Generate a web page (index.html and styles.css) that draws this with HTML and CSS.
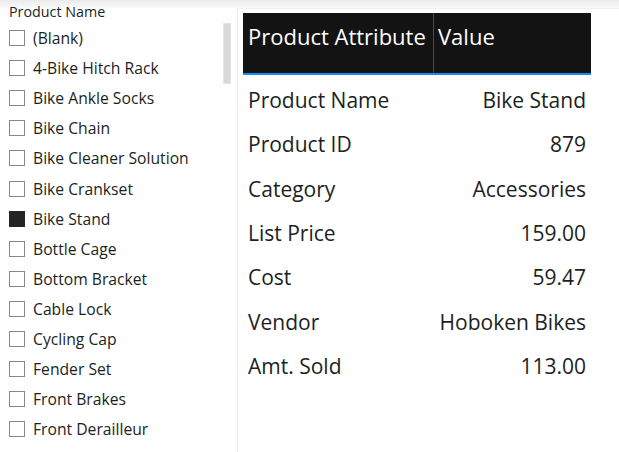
FILE: index.html
```html
<!DOCTYPE html>
<html>
<head>
<meta charset="utf-8">
<link rel="stylesheet" href="styles.css">
</head>
<body>
<div class="page">
  <div class="topband"></div>
  <div class="main">
    <section class="slicer">
      <div class="slicer-title">Product Name</div>
      <div class="slicer-body">
        <ul class="items">
          <li class="item"><span class="box"></span><span>(Blank)</span></li>
          <li class="item"><span class="box"></span><span>4-Bike Hitch Rack</span></li>
          <li class="item"><span class="box"></span><span>Bike Ankle Socks</span></li>
          <li class="item"><span class="box"></span><span>Bike Chain</span></li>
          <li class="item"><span class="box"></span><span>Bike Cleaner Solution</span></li>
          <li class="item"><span class="box"></span><span>Bike Crankset</span></li>
          <li class="item"><span class="box checked"></span><span>Bike Stand</span></li>
          <li class="item"><span class="box"></span><span>Bottle Cage</span></li>
          <li class="item"><span class="box"></span><span>Bottom Bracket</span></li>
          <li class="item"><span class="box"></span><span>Cable Lock</span></li>
          <li class="item"><span class="box"></span><span>Cycling Cap</span></li>
          <li class="item"><span class="box"></span><span>Fender Set</span></li>
          <li class="item"><span class="box"></span><span>Front Brakes</span></li>
          <li class="item"><span class="box"></span><span>Front Derailleur</span></li>
        </ul>
        <div class="track"><div class="thumb"></div></div>
      </div>
    </section>
    <section class="visual">
      <div class="table">
        <div class="thead">
          <div class="th th-attr">Product Attribute</div>
          <div class="th th-val">Value</div>
        </div>
        <div class="tbody">
          <div class="tr"><span class="attr">Product Name</span><span class="val">Bike Stand</span></div>
          <div class="tr"><span class="attr">Product ID</span><span class="val">879</span></div>
          <div class="tr"><span class="attr">Category</span><span class="val">Accessories</span></div>
          <div class="tr"><span class="attr">List Price</span><span class="val">159.00</span></div>
          <div class="tr"><span class="attr">Cost</span><span class="val">59.47</span></div>
          <div class="tr"><span class="attr">Vendor</span><span class="val">Hoboken Bikes</span></div>
          <div class="tr"><span class="attr">Amt. Sold</span><span class="val">113.00</span></div>
        </div>
      </div>
    </section>
  </div>
</div>
</body>
</html>
```
FILE: styles.css
```css
* { box-sizing: border-box; }
html, body {
  margin: 0;
  padding: 0;
  background: #ffffff;
  width: 619px;
  height: 452px;
  overflow: hidden;
  font-family: "Open Sans", "Noto Sans", sans-serif;
  color: #201f1e;
}
.page {
  position: relative;
  width: 619px;
  height: 452px;
}
.topband {
  position: absolute;
  left: 0;
  top: 0;
  width: 619px;
  height: 8px;
  background: linear-gradient(#ebebeb, #f6f6f6 70%, #fbfbfb);
}
.main {
  display: flex;
  height: 452px;
}
.slicer {
  width: 237px;
  flex: none;
  padding-top: 3px;
}
.slicer-title {
  position: relative;
  font-size: 14.3px;
  line-height: 18px;
  padding-left: 9px;
  height: 20px;
}
.slicer-body {
  display: flex;
}
.items {
  list-style: none;
  margin: 0;
  padding: 0;
  flex: 1;
}
.item {
  display: flex;
  align-items: center;
  height: 30.1px;
  font-size: 15.7px;
  padding-left: 9px;
  white-space: nowrap;
}
.box {
  width: 16px;
  height: 16px;
  border: 1px solid #8a8886;
  margin-right: 8px;
  flex: none;
  background: #fff;
}
.box.checked {
  background: #252423;
  border-color: #252423;
}
.track {
  width: 8px;
  margin-right: 6px;
}
.thumb {
  width: 8px;
  height: 61px;
  background: #d8d8d8;
  border: 1px solid #e4e4e4;
}
.visual {
  flex: 1;
  margin-top: 8px;
  border-left: 1px solid #ececec;
  border-top: 1px solid #f0f0f0;
  padding: 4px 0 0 5px;
}
.table {
  width: 348px;
}
.thead {
  display: flex;
  height: 62px;
  background: #131313;
  border-bottom: 2px solid #118dff;
  color: #ffffff;
  font-size: 22px;
}
.th {
  padding: 8px 0 0 5px;
  line-height: 30px;
  white-space: nowrap;
}
.th-attr {
  width: 191px;
  border-right: 1px solid #4a4a4a;
}
.th-val {
  flex: 1;
  padding-left: 4px;
}
.tbody {
  padding-top: 3px;
}
.tr {
  display: flex;
  justify-content: space-between;
  align-items: center;
  height: 44.3px;
  font-size: 21px;
  padding: 0 5px;
  white-space: nowrap;
}
```
